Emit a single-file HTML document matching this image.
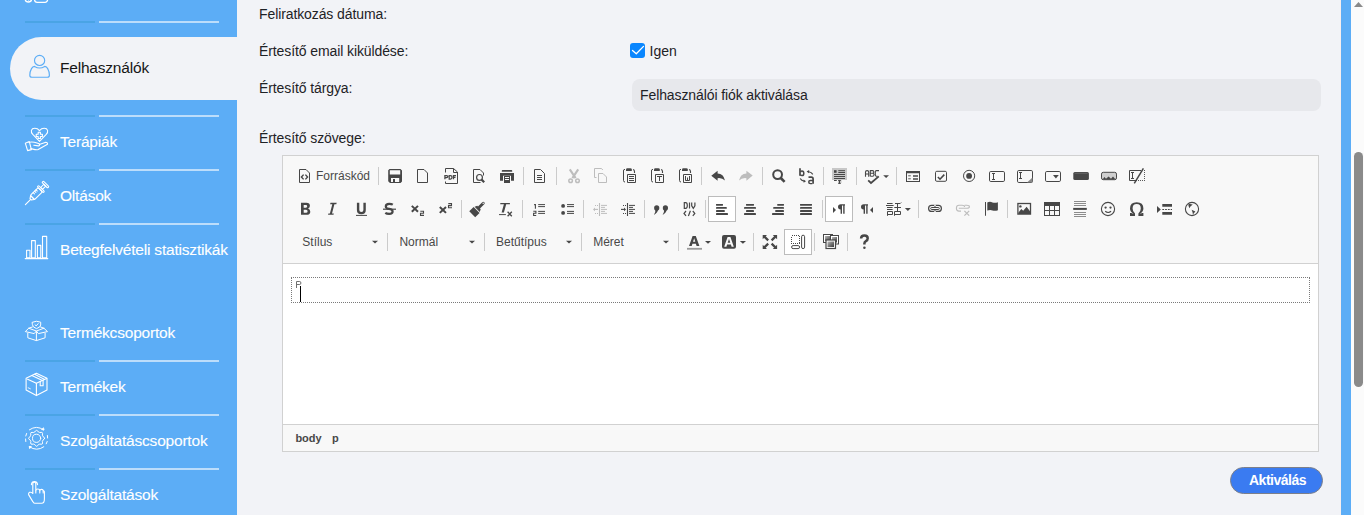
<!DOCTYPE html>
<html><head><meta charset="utf-8"><style>
html,body{margin:0;padding:0;}
body{width:1364px;height:515px;overflow:hidden;position:relative;background:#F2F3F7;font-family:"Liberation Sans",sans-serif;}
.sbt{position:absolute;left:60px;font-size:15.5px;line-height:20px;letter-spacing:-0.2px;white-space:nowrap;}
.lbl{position:absolute;font-size:14px;line-height:18px;color:#1F2328;white-space:nowrap}
.ic{position:absolute;width:16px;height:16px}
.sep{position:absolute;width:1px;height:18px;background:#D1D1D1}
.cmb{position:absolute;font-size:12px;line-height:16px;color:#484848;white-space:nowrap}
</style></head><body>
<div style="position:absolute;left:0;top:0;width:237px;height:515px;background:#5CADF6"></div>
<div style="position:absolute;left:10px;top:37px;width:227px;height:63px;background:#F2F3F7;border-radius:31.5px 0 0 31.5px"></div>
<div style="position:absolute;left:25px;top:21px;width:70px;height:2px;background:#4AA4E5"></div>
<div style="position:absolute;left:99px;top:21px;width:120px;height:2px;background:#BCDDFB"></div>
<div style="position:absolute;left:25px;top:115px;width:70px;height:2px;background:#4AA4E5"></div>
<div style="position:absolute;left:99px;top:115px;width:120px;height:2px;background:#BCDDFB"></div>
<div style="position:absolute;left:25px;top:169px;width:70px;height:2px;background:#4AA4E5"></div>
<div style="position:absolute;left:99px;top:169px;width:120px;height:2px;background:#BCDDFB"></div>
<div style="position:absolute;left:25px;top:223px;width:70px;height:2px;background:#4AA4E5"></div>
<div style="position:absolute;left:99px;top:223px;width:120px;height:2px;background:#BCDDFB"></div>
<div style="position:absolute;left:25px;top:360px;width:70px;height:2px;background:#4AA4E5"></div>
<div style="position:absolute;left:99px;top:360px;width:120px;height:2px;background:#BCDDFB"></div>
<div style="position:absolute;left:25px;top:414px;width:70px;height:2px;background:#4AA4E5"></div>
<div style="position:absolute;left:99px;top:414px;width:120px;height:2px;background:#BCDDFB"></div>
<div style="position:absolute;left:25px;top:468px;width:70px;height:2px;background:#4AA4E5"></div>
<div style="position:absolute;left:99px;top:468px;width:120px;height:2px;background:#BCDDFB"></div>
<div class="sbt" style="top:57.8px;color:#161616">Felhasználók</div>
<div class="sbt" style="top:132.3px;color:#FFFFFF;-webkit-text-stroke:0.12px #fff">Terápiák</div>
<div class="sbt" style="top:186.2px;color:#FFFFFF;-webkit-text-stroke:0.12px #fff">Oltások</div>
<div class="sbt" style="top:240.1px;color:#FFFFFF;-webkit-text-stroke:0.12px #fff">Betegfelvételi statisztikák</div>
<div class="sbt" style="top:323.0px;color:#FFFFFF;-webkit-text-stroke:0.12px #fff">Termékcsoportok</div>
<div class="sbt" style="top:377.3px;color:#FFFFFF;-webkit-text-stroke:0.12px #fff">Termékek</div>
<div class="sbt" style="top:430.8px;color:#FFFFFF;-webkit-text-stroke:0.12px #fff">Szolgáltatáscsoportok</div>
<div class="sbt" style="top:485.0px;color:#FFFFFF;-webkit-text-stroke:0.12px #fff">Szolgáltatások</div><svg style="position:absolute;left:0;top:0" width="237" height="515" viewBox="0 0 237 515" fill="none" stroke-linecap="round" stroke-linejoin="round">
<g stroke="#FFFFFF" stroke-width="1.3"><circle cx="28.4" cy="-1.2" r="3.2"/><path d="M27.2 -0.6 Q28.4 1.2 29.6 -0.6" stroke-width="1"/><rect x="34.6" y="-7" width="13" height="9.3" rx="2.6"/></g>
<g stroke="#5CADF6" stroke-width="1.15"><circle cx="39.6" cy="60.4" r="5.1"/><path d="M34.6 66.4 Q39.6 69.6 44.7 66.4 Q46.6 66.6 47.7 68.6 Q49.4 71.6 49.4 75.2 Q49.4 77.2 47.4 77.2 L31.9 77.2 Q29.8 77.2 29.8 75.2 Q29.8 71.6 31.5 68.6 Q32.6 66.6 34.6 66.4 Z"/></g>
<g stroke="#FFFFFF" stroke-width="1.1"><path d="M39.5 141.3 L32.8 134.4 Q30.9 132.3 31.4 130.3 Q32 128.3 34.8 128.3 Q37.6 128.3 39.5 130.6 Q41.4 128.3 44.2 128.3 Q47 128.3 47.6 130.3 Q48.1 132.3 46.2 134.4 Z"/><path d="M38.2 132.3 H40.4 V134.3 H42.4 V136.5 H40.4 V138.5 H38.2 V136.5 H36.2 V134.3 H38.2 Z"/><path d="M25.3 143.2 L29.3 141.6 L31.4 149.6 L27.6 150.6 Z"/><path d="M29.5 142.2 Q33 141.6 37 143 L39.3 143.8 Q40.2 145.6 38.4 145.9 L33.8 145.2"/><path d="M39.3 144.6 L45.8 142.3 Q47.8 142.3 47.5 144.2 L38.2 149.4 Q36.8 150 35 149.6 L30.8 148.6"/></g>
<g stroke="#FFFFFF" stroke-width="1.1" transform="translate(25.4 204.6) rotate(-45)"><path d="M0 0 L7.5 0"/><path d="M7.5 -1 L10 -2.6 L10 2.6 L7.5 1 Z"/><rect x="10" y="-3" width="11" height="6" rx="1"/><path d="M14 -3 V-1.2 M16 -3 V-1.2 M18 -3 V-1.2"/><rect x="21" y="-4.2" width="1.8" height="8.4" rx="0.8"/><rect x="22.8" y="-1.3" width="4.6" height="2.6"/><rect x="27.4" y="-4" width="2" height="8" rx="0.8"/></g>
<g stroke="#FFFFFF" stroke-width="1.1"><rect x="26.6" y="250.3" width="3.4" height="7.6"/><rect x="31.6" y="240.6" width="3.7" height="17.3"/><rect x="37.4" y="245.4" width="3.4" height="12.5"/><rect x="42.5" y="236.4" width="4.2" height="21.5"/><path d="M25.2 258.6 H47.8"/></g>
<g stroke="#FFFFFF" stroke-width="1.0"><path d="M32.4 322.2 Q36.5 320.2 40.7 322.2 V325 Q40.7 327.2 36.5 328.6 Q32.4 327.2 32.4 325 Z"/><path d="M35 324.8 L36.2 325.9 L38.2 323.6"/><path d="M32.4 327 L28.7 328.2 L25.3 331.6 L34.2 333.6 L36.4 331 L38.4 333.6 L47.5 331.6 L43.9 328.2 L40.6 327"/><path d="M28.7 328.2 L36.4 331 L43.9 328.2"/><path d="M27.8 333.3 V337.8 L36.4 340.6 L45.1 337.8 V333.3"/><path d="M36.4 331.2 V340.4"/></g>
<g stroke="#FFFFFF" stroke-width="1.1"><path d="M36.4 373.2 L47 378.2 V390.1 L36.4 395.6 L26.1 390.1 V378.2 Z"/><path d="M27.6 379.2 L36.4 383.2 L46.6 378.4"/><path d="M36.4 383.2 V395.4"/><path d="M31.8 375.5 L42.4 380.6 M34.6 374.3 L44.2 379.2"/><path d="M40.2 381.6 V385.8 H43.1 V380.4"/><path d="M28.2 387.8 L30.4 388.8" stroke-width="0.8"/></g>
<g stroke="#FFFFFF" stroke-width="1.0"><circle cx="36.6" cy="438.3" r="4.1"/>
<path d="M44.60 438.30 L44.06 439.28 L42.98 440.01 L42.70 440.83 L42.32 441.60 L42.57 442.88 L42.26 443.96 L41.18 444.27 L39.90 444.02 L39.13 444.40 L38.31 444.68 L37.58 445.76 L36.60 446.30 L35.62 445.76 L34.89 444.68 L34.07 444.40 L33.30 444.02 L32.02 444.27 L30.94 443.96 L30.63 442.88 L30.88 441.60 L30.50 440.83 L30.22 440.01 L29.14 439.28 L28.60 438.30 L29.14 437.32 L30.22 436.59 L30.50 435.77 L30.88 435.00 L30.63 433.72 L30.94 432.64 L32.02 432.33 L33.30 432.58 L34.07 432.20 L34.89 431.92 L35.62 430.84 L36.60 430.30 L37.58 430.84 L38.31 431.92 L39.13 432.20 L39.90 432.58 L41.18 432.33 L42.26 432.64 L42.57 433.72 L42.32 435.00 L42.70 435.77 L42.98 436.59 L44.06 437.32 Z"/>
<path d="M29.4 429.8 Q36.6 424.8 43.4 429.8"/><path d="M43.8 446.8 Q36.6 451.8 29.6 446.8"/><path d="M26.6 433.5 L25.8 436 M25.6 439 L25.8 441.5" /><path d="M47.4 435.5 L47.6 438 M47.2 441.5 L46.2 443.8"/><path d="M42 429.6 L44 430 L43.6 428.2 Z" fill="#fff"/><path d="M31 446.6 L29.2 446.4 L29.6 448.2 Z" fill="#fff"/></g>
<g stroke="#FFFFFF" stroke-width="1.1"><path d="M32.8 493.5 V484 Q32.8 482.3 34.3 482.3 Q35.8 482.3 35.8 484 V490.8 Q35.8 489 37.8 489 Q39.8 489 39.8 490.8 Q39.8 489.4 41.6 489.4 Q43.2 489.4 43.2 491 Q44.4 490.6 44.4 492.2 V499 Q44.4 503.3 41.6 503.3 H34.6 Q33.6 503.3 32.8 501.6 L28.6 494.6 Q28.2 493 29.6 492.3 Q31.6 491.8 32.8 493.5"/><path d="M31.4 484.6 Q31.8 481.6 34.4 481.6 Q37.2 481.6 37.6 484.6"/><path d="M35.8 490.8 V493 M39.8 490.8 V493 M43.2 491 V493"/></g>
</svg><div style="position:absolute;left:259px;top:5.05px;font-size:14px;line-height:18px;color:#1E2226;font-weight:400;white-space:nowrap;letter-spacing:-0.1px">Feliratkozás dátuma:</div>
<div style="position:absolute;left:259px;top:41.65px;font-size:14px;line-height:18px;color:#1E2226;font-weight:400;white-space:nowrap;letter-spacing:-0.1px">Értesítő email kiküldése:</div>
<div style="position:absolute;left:259px;top:78.85px;font-size:14px;line-height:18px;color:#1E2226;font-weight:400;white-space:nowrap;letter-spacing:-0.1px">Értesítő tárgya:</div>
<div style="position:absolute;left:259px;top:129.35px;font-size:14px;line-height:18px;color:#1E2226;font-weight:400;white-space:nowrap;letter-spacing:-0.1px">Értesítő szövege:</div>
<div style="position:absolute;left:630px;top:43px;width:15px;height:15px;border-radius:3px;background:#0A86FE"></div>
<svg style="position:absolute;left:630px;top:43px" width="15" height="15" viewBox="0 0 15 15"><path d="M2.5 7.4 L6.3 10.8 L13.5 3.4" fill="none" stroke="#fff" stroke-width="1.3" stroke-linecap="round" stroke-linejoin="round"/></svg>
<div style="position:absolute;left:649.5px;top:42.15px;font-size:14px;line-height:18px;color:#1E2226;font-weight:400;white-space:nowrap;">Igen</div>
<div style="position:absolute;left:632px;top:79px;width:689px;height:32px;border-radius:8px;background:#E7E8EC"></div>
<div style="position:absolute;left:640px;top:86.05px;font-size:14px;line-height:18px;color:#1E2226;font-weight:400;white-space:nowrap;letter-spacing:-0.1px">Felhasználói fiók aktiválása</div>
<div style="position:absolute;left:282px;top:155px;width:1035px;height:295px;border:1px solid #D1D1D1;background:#fff"></div>
<div style="position:absolute;left:283px;top:156px;width:1035px;height:107px;background:#F8F8F8;border-bottom:1px solid #D1D1D1"></div>
<div style="position:absolute;left:283px;top:424px;width:1035px;height:26px;background:#F8F8F8;border-top:1px solid #D1D1D1"></div>
<div style="position:absolute;left:291px;top:277px;width:1017px;height:24px;border:1px dotted #7A7A7A"></div>
<svg style="position:absolute;left:290px;top:276px" width="16" height="16" viewBox="290 276 16 16"><path d="M296.5 288 V281.5 H299.8 Q300.9 281.5 300.9 283 Q300.9 284.5 299.8 284.5 H296.5" fill="none" stroke="#707070" stroke-width="1"/></svg>
<div style="position:absolute;left:300px;top:286px;width:1px;height:16px;background:#000"></div>
<div style="position:absolute;left:295.4px;top:431.19px;font-size:11px;line-height:14px;color:#484848;font-weight:700;white-space:nowrap;">body</div>
<div style="position:absolute;left:331.9px;top:431.19px;font-size:11px;line-height:14px;color:#484848;font-weight:700;white-space:nowrap;">p</div>
<div style="position:absolute;left:1230px;top:467px;width:91px;height:25px;border-radius:14px;background:#3A7BF1;border:1px solid #7C7F8A"></div>
<div style="position:absolute;left:1249px;top:470.75px;font-size:14px;line-height:18px;color:#FFFFFF;font-weight:700;white-space:nowrap;letter-spacing:-0.5px">Aktiválás</div>
<div style="position:absolute;left:1340px;top:0;width:1px;height:515px;background:#F6EFEF"></div>
<div style="position:absolute;left:1341px;top:0;width:10px;height:515px;background:#5CADF6"></div>
<div style="position:absolute;left:1351px;top:0;width:13px;height:515px;background:#FBFBFB"></div>
<svg style="position:absolute;left:1351px;top:0" width="13" height="10"><path d="M3 7 L7.5 2 L12 7 Z" fill="#8A8A8A"/></svg>
<div style="position:absolute;left:1354px;top:152px;width:9px;height:235px;border-radius:4.5px;background:#8A8A8A"></div><div style="position:absolute;left:708px;top:196px;width:26px;height:24px;background:#fff;border:1px solid #BCBCBC"></div>
<div style="position:absolute;left:825px;top:196px;width:26px;height:24px;background:#fff;border:1px solid #BCBCBC"></div>
<div style="position:absolute;left:784px;top:229px;width:26px;height:24px;background:#fff;border:1px solid #BCBCBC"></div>
<svg style="position:absolute;left:0;top:0" width="1364" height="270" viewBox="0 0 1364 270">
<rect x="378" y="167" width="1" height="18" fill="#CBCBCB"/>
<rect x="523" y="167" width="1" height="18" fill="#CBCBCB"/>
<rect x="556" y="167" width="1" height="18" fill="#CBCBCB"/>
<rect x="701" y="167" width="1" height="18" fill="#CBCBCB"/>
<rect x="762" y="167" width="1" height="18" fill="#CBCBCB"/>
<rect x="823" y="167" width="1" height="18" fill="#CBCBCB"/>
<rect x="856" y="167" width="1" height="18" fill="#CBCBCB"/>
<rect x="896" y="167" width="1" height="18" fill="#CBCBCB"/>
<rect x="461" y="200" width="1" height="18" fill="#CBCBCB"/>
<rect x="522" y="200" width="1" height="18" fill="#CBCBCB"/>
<rect x="583" y="200" width="1" height="18" fill="#CBCBCB"/>
<rect x="644" y="200" width="1" height="18" fill="#CBCBCB"/>
<rect x="705" y="200" width="1" height="18" fill="#CBCBCB"/>
<rect x="822" y="200" width="1" height="18" fill="#CBCBCB"/>
<rect x="918" y="200" width="1" height="18" fill="#CBCBCB"/>
<rect x="1007" y="200" width="1" height="18" fill="#CBCBCB"/>
<rect x="387" y="233" width="1" height="18" fill="#CBCBCB"/>
<rect x="484" y="233" width="1" height="18" fill="#CBCBCB"/>
<rect x="581" y="233" width="1" height="18" fill="#CBCBCB"/>
<rect x="678" y="233" width="1" height="18" fill="#CBCBCB"/>
<rect x="753" y="233" width="1" height="18" fill="#CBCBCB"/>
<rect x="814" y="233" width="1" height="18" fill="#CBCBCB"/>
<rect x="847" y="233" width="1" height="18" fill="#CBCBCB"/>
<path d="M299.5 169.5 H306 L309.5 173 V182.5 H299.5 Z" fill="none" stroke="#474747" stroke-width="1"/>
<path d="M303.6 174.6 L301.4 177 L303.6 179.4 M305.4 174.6 L307.6 177 L305.4 179.4" fill="none" stroke="#474747" stroke-width="1.4"/>
</svg>
<div style="position:absolute;left:316px;top:168px;font-size:12px;line-height:16px;color:#484848;white-space:nowrap">Forráskód</div>
<svg style="position:absolute;left:0;top:0" width="1364" height="270" viewBox="0 0 1364 270">
<path d="M389.5 169 H400.5 L402 170.5 V181.5 L400.5 183 H390 L388.2 181.2 V170.3 Z M389.8 170.2 V174.6 H400.2 V170.2 Z M391 178 V182 H393 V179 H395 V182 H399.2 V178 Z" fill="#474747" fill-rule="evenodd"/>
<path d="M417.5 169.5 H424 L427.5 173 V182.5 H417.5 Z" fill="none" stroke="#474747" stroke-width="1"/>
<path d="M445.5 172.5 V168.5 H453.5 L457.5 172 V183.5 H445.5 V181.5" fill="none" stroke="#474747" stroke-width="1"/>
<path d="M453.5 168.5 V172.5 H457.5" fill="none" stroke="#474747" stroke-width="1"/>
<path d="M444.9 179.2 V175.5 H446.7 Q447.8 175.5 447.8 176.6 Q447.8 177.7 446.7 177.7 H444.9 M449.2 179.2 V175.5 H450.5 Q452 175.5 452 177.35 Q452 179.2 450.5 179.2 Z M456 175.5 H453.5 V179.2 M453.5 177.4 H455.5" fill="none" stroke="#474747" stroke-width="1.25"/>
<path d="M480.5 182.5 H473.5 V169.5 H480 L483.5 173 V175.5" fill="none" stroke="#474747" stroke-width="1"/>
<circle cx="479.5" cy="177.4" r="2.9" fill="none" stroke="#474747" stroke-width="1.2"/>
<path d="M481.6 179.6 L484.2 182.2" fill="none" stroke="#474747" stroke-width="2.2"/>
<path d="M502.5 170 H511.5 Q512.2 170 512.2 170.8 V171.7 H501.8 V170.8 Q501.8 170 502.5 170 Z" fill="#474747"/>
<path d="M500 173 H514 V180.8 H511 V175.8 H503 V180.8 H500 Z" fill="#474747"/>
<path d="M504 176 H510 V183 H504 Z M505 177 V178 H509 V177 Z M505 179 V180 H509 V179 Z" fill="#474747" fill-rule="evenodd"/>
<path d="M534.5 169.5 H540.5 L544.5 173.5 V182.5 H534.5 Z" fill="none" stroke="#474747" stroke-width="1"/>
<path d="M537 175.5 H542 M537 177.5 H542 M537 179.5 H542" fill="none" stroke="#474747" stroke-width="1"/>
<path d="M569.8 169.4 L575.6 178.2 M578.2 169.4 L572.4 178.2" fill="none" stroke="#BDBDBD" stroke-width="2.1"/>
<circle cx="570.6" cy="180.7" r="1.8" fill="none" stroke="#BDBDBD" stroke-width="1.5"/>
<circle cx="577.5" cy="180.7" r="1.8" fill="none" stroke="#BDBDBD" stroke-width="1.5"/>
<path d="M596.5 177.5 H594.5 V168.5 H601.5 L602.8 170" fill="none" stroke="#BDBDBD" stroke-width="1"/>
<path d="M598.5 173.5 H603 L606.5 177 V182.5 H598.5 Z" fill="none" stroke="#BDBDBD" stroke-width="1"/>
<path d="M625 169.5 H624 Q623.5 169.5 623.5 171 V180.5 Q623.5 182 625 182" fill="none" stroke="#474747" stroke-width="1"/>
<path d="M633 169.5 Q634.5 169.8 634.5 171.5 V173" fill="none" stroke="#474747" stroke-width="1.1"/>
<path d="M626 171 V169.6 Q626 168.3 627.4 168.3 H630.3 Q631.8 168.3 631.8 169.6 V171 Z" fill="#474747"/>
<path d="M627.5 174.5 H635.5 V182.5 H627.5 Z" fill="none" stroke="#474747" stroke-width="1"/>
<path d="M629 176.5 H634 M629 178.5 H634 M629 180.5 H634" fill="none" stroke="#474747" stroke-width="1"/>
<path d="M653 169.5 H652 Q651.5 169.5 651.5 171 V180.5 Q651.5 182 653 182" fill="none" stroke="#474747" stroke-width="1"/>
<path d="M661 169.5 Q662.5 169.8 662.5 171.5 V173" fill="none" stroke="#474747" stroke-width="1.1"/>
<path d="M654 171 V169.6 Q654 168.3 655.4 168.3 H658.3 Q659.8 168.3 659.8 169.6 V171 Z" fill="#474747"/>
<path d="M655.5 174.5 H663.5 V182.5 H655.5 Z" fill="none" stroke="#474747" stroke-width="1"/>
<path d="M657 176.5 H662 M659.5 176.5 V181" fill="none" stroke="#474747" stroke-width="1"/>
<path d="M681 169.5 H680 Q679.5 169.5 679.5 171 V180.5 Q679.5 182 681 182" fill="none" stroke="#474747" stroke-width="1"/>
<path d="M689 169.5 Q690.5 169.8 690.5 171.5 V173" fill="none" stroke="#474747" stroke-width="1.1"/>
<path d="M682 171 V169.6 Q682 168.3 683.4 168.3 H686.3 Q687.8 168.3 687.8 169.6 V171 Z" fill="#474747"/>
<path d="M683.5 174.5 H691.5 V182.5 H683.5 Z" fill="none" stroke="#474747" stroke-width="1"/>
<path d="M685.5 176 V180.5 H689.5 V176 M687.5 177.5 V180.5" fill="none" stroke="#474747" stroke-width="1"/>
<path d="M711.3 175.8 L717.6 170.8 V173.5 Q723.5 173.5 725 180.6 Q722 177.6 717.6 178.2 V180.8 Z" fill="#474747"/>
<path d="M752.7 175.6 L746.4 170.8 V173.5 Q740.5 173.5 739 180.6 Q742 177.6 746.4 178.2 V180.8 Z" fill="#BDBDBD"/>
<circle cx="777.6" cy="174.6" r="4.4" fill="none" stroke="#474747" stroke-width="2"/>
<path d="M780.8 178 L784.6 181.8" fill="none" stroke="#474747" stroke-width="2.6"/>
<path d="M800 168.2 V175.8" fill="none" stroke="#474747" stroke-width="1.7"/>
<path d="M800.4 172 Q801 171.1 802 171.1 Q803.8 171.1 803.8 173.4 Q803.8 175.6 802 175.6 Q801 175.6 800.4 174.7" fill="none" stroke="#474747" stroke-width="1.5"/>
<path d="M808.5 177.2 H811.3 Q813.1 177.2 813.1 179.1 V183.8" fill="none" stroke="#474747" stroke-width="1.7"/>
<path d="M813 180.5 H810.5 Q808.7 180.5 808.7 182.1 Q808.7 183.6 810.4 183.6 H812.4" fill="none" stroke="#474747" stroke-width="1.4"/>
<path d="M812.8 174.4 Q811.6 172.4 808.6 171.8" fill="none" stroke="#474747" stroke-width="1.1"/>
<path d="M806.6 171.6 L809.2 169.9 L809 173.3 Z" fill="#474747"/>
<path d="M800.2 178.4 Q801.4 180.6 804.2 181.1" fill="none" stroke="#474747" stroke-width="1.1"/>
<path d="M806 181.3 L803.6 179.6 L803.6 182.8 Z" fill="#474747"/>
<path d="M832 168 H847 V180 H841.5 V183 H838 V180 H832 Z" fill="#C8C8C8"/>
<path d="M834 170.2 H836.6 V172.8 H834 Z" fill="#474747"/>
<path d="M838.3 170.7 H845 M838.3 172.5 H845 M834 174.5 H845 M834 176.5 H845 M834 178.5 H845 M834 180.5 H836.8" fill="none" stroke="#474747" stroke-width="1"/>
<path d="M838.2 180.5 H840.8 M839.5 180.5 V183.4 M838.2 183.4 H840.8" fill="none" stroke="#474747" stroke-width="1"/>
<path d="M865.5 176.8 V172 Q865.5 170.6 867.1 170.6 Q868.7 170.6 868.7 172 V176.8 M865.5 174 H868.7 M870.3 176.3 V170.6 H872.6 Q873.8 170.6 873.8 171.95 Q873.8 173.3 872.6 173.3 H870.3 M872.6 173.3 Q874 173.3 874 174.8 Q874 176.3 872.6 176.3 H870.3 M879 170.6 H876.4 Q875.3 170.6 875.3 171.8 V175.1 Q875.3 176.3 876.4 176.3 H877.6" fill="none" stroke="#474747" stroke-width="1.1"/>
<path d="M868.2 180.4 L871 183 L878.8 176.4" fill="none" stroke="#474747" stroke-width="1.8"/>
<path d="M883.2 175.2 H889 L886.1 178.1 Z" fill="#474747"/>
<path d="M906 171 H920 V182 H906 Z M907 173.2 V181 H919 V173.2 Z" fill="#474747"/>
<path d="M908.2 175.8 H910.8 M908.2 178.8 H910.8" fill="none" stroke="#474747" stroke-width="0.9"/>
<path d="M913 175.2 H918 V176.8 H913 Z M913 178.2 H918 V179.8 H913 Z" fill="#474747"/>
<rect x="935.5" y="171.3" width="11" height="10" rx="1.3" fill="none" stroke="#474747" stroke-width="1"/>
<path d="M937.9 177 L940 179.2 L944.3 174.6" fill="none" stroke="#474747" stroke-width="1.6"/>
<circle cx="969.1" cy="175.9" r="5.6" fill="none" stroke="#474747" stroke-width="1"/>
<circle cx="969.1" cy="175.9" r="2.9" fill="#474747"/>
<rect x="989.5" y="171.5" width="15" height="10" rx="1.3" fill="none" stroke="#474747" stroke-width="1"/>
<path d="M992 173.5 H995 M993.5 173.5 V179.5 M992 179.5 H995" fill="none" stroke="#474747" stroke-width="1"/>
<rect x="1017.5" y="170.5" width="15" height="12" rx="1.3" fill="none" stroke="#474747" stroke-width="1"/>
<path d="M1019 172.5 H1022 M1020.5 172.5 V178.5 M1019 178.5 H1022" fill="none" stroke="#474747" stroke-width="1"/>
<path d="M1027 182.5 L1032.5 177.4 V182.5 Z" fill="#8A8A8A"/>
<rect x="1045.5" y="171.5" width="15" height="10" rx="1.3" fill="none" stroke="#474747" stroke-width="1"/>
<path d="M1053 175 H1058.8 L1055.9 178.4 Z" fill="#474747"/>
<rect x="1073.3" y="172" width="15.6" height="8" rx="1.6" fill="#474747"/>
<path d="M1074.6 172.8 H1087.6 V173.7 H1074.6 Z" fill="#6A6A6A"/>
<rect x="1101.5" y="172.3" width="15" height="7.4" rx="1.8" fill="#CFCFCF" stroke="#474747" stroke-width="1"/>
<path d="M1102.6 179.4 L1104.4 177 L1106 178.8 L1108.6 176.4 L1111 178.8 L1113 176.4 L1115.6 179.4 Z" fill="#474747"/>
<path d="M1141 170.5 H1129.5 V180.5 H1137" fill="none" stroke="#474747" stroke-width="1"/>
<path d="M1131 172.5 H1134 M1132.5 172.5 V178.5 M1131 178.5 H1134" fill="none" stroke="#474747" stroke-width="1"/>
<path d="M1134.3 183.4 L1143.4 168.4" fill="none" stroke="#474747" stroke-width="1.5"/>
<path d="M1144 170 h1 v1 h-1 Z M1144 172 h1 v1 h-1 Z M1144 174 h1 v1 h-1 Z M1144 176 h1 v1 h-1 Z M1144 178 h1 v1 h-1 Z M1144 180 h1 v1 h-1 Z M1138 180 h1 v1 h-1 Z M1140 180 h1 v1 h-1 Z M1142 180 h1 v1 h-1 Z" fill="#5A5A5A"/>
<path d="M301 202.8 H306.4 Q309.9 202.8 309.9 205.7 Q309.9 207.6 308.1 208.5 Q310.3 209.2 310.3 211.7 Q310.3 214.8 306.6 214.8 H301 Z M303.7 204.9 V207.7 H305.9 Q307.2 207.7 307.2 206.3 Q307.2 204.9 305.9 204.9 Z M303.7 209.7 V212.7 H306.1 Q307.6 212.7 307.6 211.2 Q307.6 209.7 306.1 209.7 Z" fill="#474747" fill-rule="evenodd"/>
<path d="M330.5 202.8 H336.7 L336.3 204.2 H334.4 L332 213.4 H333.8 L333.5 214.8 H328 L328.4 213.4 H329.9 L332.3 204.2 H330.1 Z" fill="#474747"/>
<path d="M358.1 202.8 V210 Q358.1 213.1 361.35 213.1 Q364.6 213.1 364.6 210 V202.8" fill="none" stroke="#474747" stroke-width="2.4"/>
<path d="M356 214.9 H367 V215.9 H356 Z" fill="#474747"/>
<path d="M392.8 204.6 Q391.5 203.8 389.2 203.8 Q385.8 203.8 385.8 206.4 Q385.8 208.4 389.2 208.9 Q392.6 209.4 392.6 211.5 Q392.6 213.8 389.2 213.8 Q386.6 213.8 385.3 212.8" fill="none" stroke="#474747" stroke-width="2.2"/>
<path d="M383 208.6 H396 V209.8 H383 Z" fill="#474747"/>
<path d="M411.79999999999995 205.9 L418.0 211.8 M418.0 205.9 L411.79999999999995 211.8" fill="none" stroke="#474747" stroke-width="2.0"/>
<path d="M420.3 211.29999999999998 H423.5 V213.29999999999998 H420.5 V215.39999999999998 H424" fill="none" stroke="#474747" stroke-width="1.1"/>
<path d="M439.79999999999995 207.0 L446.0 212.9 M446.0 207.0 L439.79999999999995 212.9" fill="none" stroke="#474747" stroke-width="2.0"/>
<path d="M448.3 203.6 H451.5 V205.6 H448.5 V207.7 H452" fill="none" stroke="#474747" stroke-width="1.1"/>
<g transform="translate(477.3 209.2) rotate(45)"><rect x="-4.2" y="1" width="8.4" height="6.2" fill="#474747"/><path d="M-3.6 0.2 H3.6 L2.4 -2.4 H1.4 V-8.4 Q1.4 -9.9 0 -9.9 Q-1.4 -9.9 -1.4 -8.4 V-2.4 H-2.4 Z" fill="#474747"/><circle cx="0" cy="-8.3" r="0.7" fill="#F8F8F8"/></g>
<path d="M500.3 203 H509.9 V204.2 H506.2 L503.9 212.6 H501.6 L503.9 204.2 H500.3 Z" fill="#474747"/>
<path d="M499 214.1 H505.9 V215.1 H499 Z" fill="#474747"/>
<path d="M507.6 211.8 L511.8 216.2 M511.8 211.8 L507.6 216.2" fill="none" stroke="#474747" stroke-width="1.3"/>
<path d="M534.1 204.6 H535.4 V208.8" fill="none" stroke="#474747" stroke-width="1.1"/>
<path d="M533.3 211.3 H535.9 V213.2 H533.6 V215.5 H536.2" fill="none" stroke="#474747" stroke-width="1.1"/>
<path d="M538.2 204.6 H545 M538.2 206.6 H545 M538.2 211.4 H545 M538.2 213.4 H545" fill="none" stroke="#474747" stroke-width="1"/>
<circle cx="563.1" cy="205.9" r="1.9" fill="#474747"/><circle cx="563.1" cy="212.9" r="1.9" fill="#474747"/>
<path d="M567 204.6 H574 M567 206.6 H574 M567 211.4 H574 M567 213.4 H574" fill="none" stroke="#474747" stroke-width="1"/>
<path d="M595 205 h1 v1 h-1 Z M597 205 h1 v1 h-1 Z M595 213 h1 v1 h-1 Z M597 213 h1 v1 h-1 Z" fill="#BDBDBD"/>
<path d="M599.5 203 V216" fill="none" stroke="#BDBDBD" stroke-width="1.1"/>
<path d="M601 205.4 H607 M601 207.4 H605 M601 209.4 H607 M601 211.4 H605 M601 213.4 H607" fill="none" stroke="#BDBDBD" stroke-width="1"/>
<path d="M594.5 209.4 H598" fill="none" stroke="#BDBDBD" stroke-width="1.1"/>
<path d="M593 209.4 L595 207.6 V211.2 Z" fill="#BDBDBD"/>
<path d="M623 205 h1 v1 h-1 Z M625 205 h1 v1 h-1 Z M623 213 h1 v1 h-1 Z M625 213 h1 v1 h-1 Z" fill="#474747"/>
<path d="M627.5 203 V216" fill="none" stroke="#474747" stroke-width="1.1"/>
<path d="M629 205.4 H635 M629 207.4 H633 M629 209.4 H635 M629 211.4 H633 M629 213.4 H635" fill="none" stroke="#474747" stroke-width="1"/>
<path d="M621 209.4 H624.5" fill="none" stroke="#474747" stroke-width="1.1"/>
<path d="M626 209.4 L624 207.6 V211.2 Z" fill="#474747"/>
<circle cx="656.7" cy="207.9" r="2.6" fill="#474747"/>
<path d="M658.2 209.2 Q657.7 212.8 653.9000000000001 214.9 Q655.9000000000001 212.4 655.3000000000001 209.6 Z" fill="#474747"/>
<circle cx="665.4" cy="207.9" r="2.6" fill="#474747"/>
<path d="M666.9 209.2 Q666.4 212.8 662.6 214.9 Q664.6 212.4 664.0 209.6 Z" fill="#474747"/>
<path d="M684.3 208.3 V202.6 H685.7 Q687.3 202.6 687.3 205.45 Q687.3 208.3 685.7 208.3 Z M689.5 202.4 V208.4 M691.7 202.4 V205.8 L693.3 208.3 L694.9 205.8 V202.4" fill="none" stroke="#474747" stroke-width="1.2"/>
<path d="M686 211 L684 213.4 L686 215.8 M692.8 211 L694.8 213.4 L692.8 215.8 M690.4 210.8 L688.4 216" fill="none" stroke="#474747" stroke-width="1.2"/>
<rect x="716" y="203.9" width="7.0" height="1.8" rx="0.4" fill="#474747"/>
<rect x="716" y="207.0" width="10.8" height="1.8" rx="0.4" fill="#474747"/>
<rect x="716" y="210.1" width="8.8" height="1.8" rx="0.4" fill="#474747"/>
<rect x="716" y="213.1" width="12.0" height="1.8" rx="0.4" fill="#474747"/>
<rect x="746" y="203.9" width="8.0" height="1.8" rx="0.4" fill="#474747"/>
<rect x="744" y="207.0" width="12.0" height="1.8" rx="0.4" fill="#474747"/>
<rect x="746" y="210.1" width="8.0" height="1.8" rx="0.4" fill="#474747"/>
<rect x="744" y="213.1" width="12.0" height="1.8" rx="0.4" fill="#474747"/>
<rect x="777.2" y="203.9" width="6.8" height="1.8" rx="0.4" fill="#474747"/>
<rect x="773.2" y="207.0" width="10.8" height="1.8" rx="0.4" fill="#474747"/>
<rect x="775.2" y="210.1" width="8.8" height="1.8" rx="0.4" fill="#474747"/>
<rect x="772" y="213.1" width="12.0" height="1.8" rx="0.4" fill="#474747"/>
<rect x="800" y="203.9" width="12" height="1.8" rx="0.4" fill="#474747"/>
<rect x="800" y="207.0" width="12" height="1.8" rx="0.4" fill="#474747"/>
<rect x="800" y="210.1" width="12" height="1.8" rx="0.4" fill="#474747"/>
<rect x="800" y="213.1" width="12" height="1.8" rx="0.4" fill="#474747"/>
<path d="M833 207 L836 210 L833 213 Z" fill="#474747"/>
<path d="M845 204.2 H840.8 Q838 204.2 838 206.8 Q838 209.4 840.6 209.4 V213.8 H842 V205.4 H843.2 V213.8 H844.6 V205.4 H845 Z" fill="#474747" fill-rule="evenodd"/>
<path d="M868 204.2 H863.8 Q861 204.2 861 206.8 Q861 209.4 863.6 209.4 V213.8 H865 V205.4 H866.2 V213.8 H867.6 V205.4 H868 Z" fill="#474747" fill-rule="evenodd"/>
<path d="M873 207 L870 210 L873 213 Z" fill="#474747"/>
<path d="M887 203.5 H892.6 M886 205.5 H893.6 M887 207.5 H892.6 M887 209.5 H892.6 M887.5 215.8 V211.5 H892.5 V214.5 H887.5" fill="none" stroke="#474747" stroke-width="1"/>
<path d="M895 203.5 H900.2 L901.2 202.5 M897.5 203.5 V211.5 M894.3 207.5 H901 M894.5 215.8 V211.5 H900.5 V214.5 H894.5" fill="none" stroke="#474747" stroke-width="1"/>
<path d="M904.9 207.9 H910.9 L907.9 211 Z" fill="#474747"/>
<rect x="928.6" y="205.4" width="12.8" height="6" rx="3" fill="none" stroke="#474747" stroke-width="1.2"/>
<rect x="930.7" y="207.5" width="8.6" height="2" rx="1" fill="none" stroke="#474747" stroke-width="1"/>
<rect x="934.2" y="204.6" width="1.6" height="1.6" fill="#F8F8F8"/><rect x="934.2" y="210.8" width="1.6" height="1.6" fill="#F8F8F8"/>
<circle cx="935" cy="206.4" r="0.6" fill="#474747"/><circle cx="935" cy="210.6" r="0.6" fill="#474747"/>
<path d="M961 211.1 H959 Q956.4 211.1 956.4 208.2 Q956.4 205.3 959 205.3 H962 Q964.6 205.3 964.6 207 M958.8 208.2 H963.6" fill="none" stroke="#BDBDBD" stroke-width="1.1"/>
<path d="M963.4 208.2 H966.8 Q969.4 208.2 969.4 206.7 Q969.4 205.3 966.8 205.3 H964.6" fill="none" stroke="#BDBDBD" stroke-width="1.1"/>
<path d="M964.4 210.8 L969.2 215.6 M969.2 210.8 L964.4 215.6" fill="none" stroke="#BDBDBD" stroke-width="1.2"/>
<path d="M985 202 H986 V215.8 H985 Z" fill="#474747"/>
<path d="M987.3 202.4 Q990 201.2 992.5 202.4 Q995 203.4 997.9 202.2 V210.2 Q995 211.4 992.5 210.4 Q990 209.3 987.3 210.6 Z" fill="#474747"/>
<rect x="1017.9" y="203.5" width="12.6" height="10.6" fill="none" stroke="#474747" stroke-width="1.3"/>
<circle cx="1020.4" cy="206.4" r="1.2" fill="#474747"/>
<path d="M1018.5 214 V212.4 L1021.3 209 L1023.2 210.8 L1026.6 206.8 L1030 211.2 V214 Z" fill="#474747"/>
<path d="M1044 202 H1060 V216 H1044 Z M1045 206 V210 H1049 V206 Z M1050 206 V210 H1054 V206 Z M1055 206 V210 H1059 V206 Z M1045 211 V215 H1049 V211 Z M1050 211 V215 H1054 V211 Z M1055 211 V215 H1059 V211 Z" fill="#474747" fill-rule="evenodd"/>
<path d="M1074 201.5 H1086 M1074 203.5 H1086 M1074 205.5 H1086 M1074 212.5 H1086 M1074 214.5 H1086 M1074 216.5 H1086" fill="none" stroke="#8C8C8C" stroke-width="1"/>
<path d="M1073.2 207.9 H1086.8 V209.9 H1073.2 Z" fill="#474747"/>
<circle cx="1108" cy="209" r="6.6" fill="none" stroke="#474747" stroke-width="1.1"/>
<circle cx="1105.6" cy="207.6" r="1.15" fill="#474747"/><circle cx="1110.5" cy="207.6" r="1.15" fill="#474747"/>
<path d="M1105.2 211.3 Q1108.1 213.6 1111.1 211.3" fill="none" stroke="#474747" stroke-width="1.1"/>
<path d="M1130 215.9 V213 H1131.4 Q1132.2 213.7 1133.6 213.8 Q1130 211.6 1130 208.4 Q1130 202.3 1136.7 202.3 Q1143.4 202.3 1143.4 208.4 Q1143.4 211.6 1139.8 213.8 Q1141.2 213.7 1142 213 H1143.4 V215.9 H1138.4 V213.4 Q1140.8 211.4 1140.8 208.4 Q1140.8 204 1136.7 204 Q1132.6 204 1132.6 208.4 Q1132.6 211.4 1135 213.4 V215.9 Z" fill="#474747" fill-rule="evenodd"/>
<path d="M1157 206 L1160.8 209.5 L1157 213 Z" fill="#474747"/>
<path d="M1162.3 204 H1172 V206.7 H1162.3 Z M1162.3 212.1 H1172 V214.8 H1162.3 Z" fill="#474747"/>
<path d="M1162.3 209.5 H1172" fill="none" stroke="#474747" stroke-width="1" stroke-dasharray="1.8 1"/>
<circle cx="1192" cy="209" r="6.6" fill="none" stroke="#474747" stroke-width="1.1"/>
<path d="M1188.6 203.8 L1192.8 204.4 L1190.4 206.4 L1189.4 208.2 L1188.4 205.6 Z M1191.6 209.8 L1195.4 211.4 L1193.6 213.6 L1193 215.4 L1192.6 212.4 Z" fill="#474747"/>
</svg>
<div style="position:absolute;left:302.3px;top:235px;font-size:12px;line-height:14px;color:#484848;white-space:nowrap">Stílus</div>
<div style="position:absolute;left:399.4px;top:235px;font-size:12px;line-height:14px;color:#484848;white-space:nowrap">Normál</div>
<div style="position:absolute;left:496px;top:235px;font-size:12px;line-height:14px;color:#484848;white-space:nowrap">Betűtípus</div>
<div style="position:absolute;left:593.2px;top:235px;font-size:12px;line-height:14px;color:#484848;white-space:nowrap">Méret</div>
<svg style="position:absolute;left:0;top:0" width="1364" height="270" viewBox="0 0 1364 270">
<path d="M372 240.8 H378 L375 243.6 Z" fill="#474747"/>
<path d="M469 240.8 H475 L472 243.6 Z" fill="#474747"/>
<path d="M566 240.8 H572 L569 243.6 Z" fill="#474747"/>
<path d="M663 240.8 H669 L666 243.6 Z" fill="#474747"/>
<path d="M692.6 236 H695.8 L699.4 245.9 H696.6 L695.9 243.8 H692.4 L691.7 245.9 H689 Z M693 241.8 H695.3 L694.2 238.2 Z" fill="#474747"/>
<path d="M687 247.9 H702 V249.7 H687 Z" fill="#9A9A9A"/>
<path d="M705 240.9 H711 L708 243.8 Z" fill="#474747"/>
<path d="M724 235 H734 Q736 235 736 237 V246.8 Q736 248.8 734 248.8 H724 Q722 248.8 722 246.8 V237 Q722 235 724 235 Z M727.6 237 L724.2 246.8 H726.4 L727.1 244.6 H730.9 L731.6 246.8 H733.8 L730.4 237 Z M727.7 242.8 H730.3 L729 238.9 Z" fill="#474747" fill-rule="evenodd"/>
<path d="M739.8 240.9 H746 L742.9 243.8 Z" fill="#474747"/>
<path d="M764.4 236.6 L768.2 240.4 M775.4 236.6 L771.6 240.4 M764.4 247.4 L768.2 243.6 M775.4 247.4 L771.6 243.6" fill="none" stroke="#474747" stroke-width="2.2"/>
<path d="M762.7 234.9 H767 L762.7 239.2 Z M777.1 234.9 H772.8 L777.1 239.2 Z M762.7 249 H767 L762.7 244.7 Z M777.1 249 H772.8 L777.1 244.7 Z" fill="#474747"/>
<rect x="791.5" y="235.5" width="8" height="8" fill="none" stroke="#474747" stroke-width="1" stroke-dasharray="1 1" shape-rendering="crispEdges"/>
<rect x="791.6" y="245.6" width="8" height="3" rx="1.5" fill="none" stroke="#474747" stroke-width="1"/>
<rect x="801.6" y="235.2" width="3" height="13.4" rx="1.5" fill="none" stroke="#474747" stroke-width="1"/>
<defs><linearGradient id="gr" x1="0" y1="0" x2="1" y2="1"><stop offset="0" stop-color="#B8B8B8"/><stop offset="1" stop-color="#3A3A3A"/></linearGradient></defs>
<rect x="823.5" y="234.5" width="9" height="8" fill="#fff" stroke="#474747" stroke-width="1"/>
<rect x="825" y="236" width="6" height="5" fill="url(#gr)"/>
<rect x="830.5" y="235.5" width="8" height="8.5" fill="#fff" stroke="#474747" stroke-width="1"/>
<rect x="832" y="237" width="5" height="5.5" fill="url(#gr)"/>
<rect x="826" y="240" width="9.5" height="8.5" fill="#fff" stroke="#474747" stroke-width="1.2"/>
<rect x="827.5" y="241.5" width="6.5" height="5.5" fill="url(#gr)"/>
<path d="M861.1 238.6 Q861.1 235.4 864.4 235.4 Q867.7 235.4 867.7 238.2 Q867.7 240.2 865.9 241.2 Q864.4 242 864.4 243.6 V244.6" fill="none" stroke="#474747" stroke-width="2.5"/>
<circle cx="864.4" cy="247.8" r="1.25" fill="#474747"/>
</svg>
</body></html>
